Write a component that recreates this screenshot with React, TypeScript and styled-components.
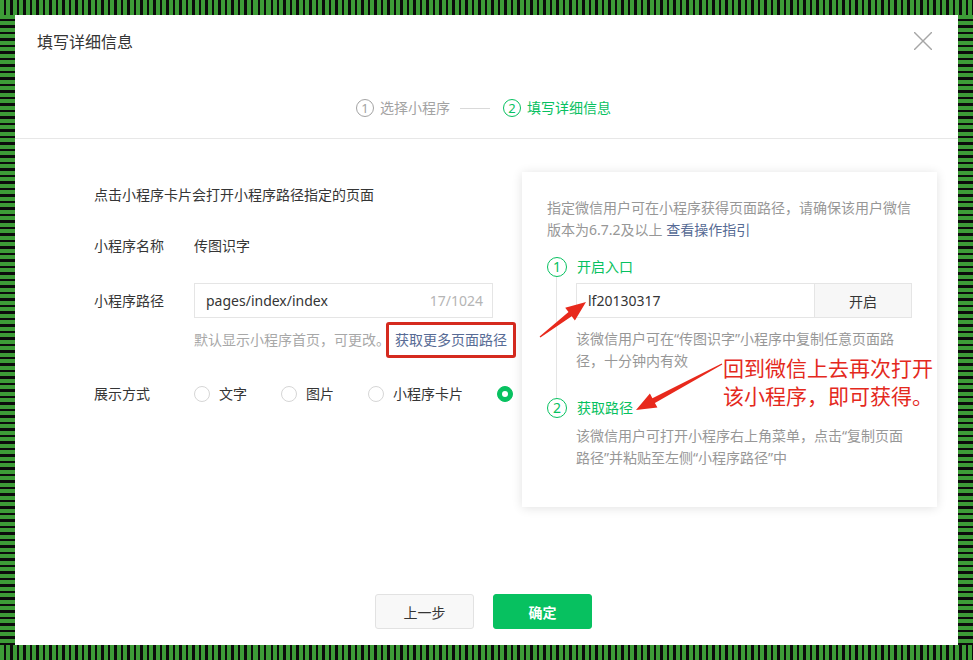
import styled, { createGlobalStyle } from "styled-components";

const GlobalStyle = createGlobalStyle`
  html, body {
    margin: 0;
    padding: 0;
    background: #fff;
  }
  body {
    font-family: "Noto Sans", "Noto Sans CJK SC", sans-serif;
    color: #353535;
  }
`;

const GREEN = "#07c160";
const RED = "#e4291d";

// striped frame round the dialog
const Frame = styled.div`
  position: relative;
  width: 973px;
  height: 660px;
  display: flex;
  flex-direction: column;
  overflow: hidden;
`;

const HBar = styled.div`
  height: 15px;
  flex-shrink: 0;
  background: repeating-linear-gradient(90deg, #3d9c37 0 4px, #0c0c0c 4px 6.5px);
`;

const Middle = styled.div`
  flex: 1;
  display: flex;
  padding: 0 15px;
  background: repeating-linear-gradient(180deg, #3d9c37 0 4px, #0c0c0c 4px 6.5px);
`;

const Dialog = styled.div`
  flex: 1;
  display: flex;
  flex-direction: column;
  background: #fff;
`;

const Header = styled.header`
  height: 52px;
  display: flex;
  align-items: center;
  justify-content: space-between;
  padding: 0 26px 0 22px;
`;

const Title = styled.h2`
  margin: 0;
  font-size: 16px;
  font-weight: normal;
  color: #353535;
`;

const Close = styled.svg`
  width: 18px;
  height: 18px;
  stroke: #a6a6a6;
  stroke-width: 1.4;
`;

const Steps = styled.div`
  box-sizing: border-box;
  height: 72px;
  padding: 31px 6px 0 0;
  display: flex;
  justify-content: center;
  align-items: flex-start;
  border-bottom: 1px solid #e7e7e7;
`;

const StepItem = styled.div<{ $active?: boolean }>`
  display: flex;
  align-items: center;
  gap: 6px;
  font-size: 14px;
  line-height: 20px;
  color: ${(p) => (p.$active ? GREEN : "#a3a3a3")};
`;

const StepCircle = styled.span`
  box-sizing: border-box;
  width: 18px;
  height: 18px;
  border: 1px solid currentColor;
  border-radius: 50%;
  display: flex;
  align-items: center;
  justify-content: center;
  font-size: 13px;
  line-height: 1;
`;

const StepLine = styled.span`
  width: 30px;
  height: 1px;
  margin: 10px 13px 0 10px;
  background: #d9d9d9;
`;

const Body = styled.div`
  flex: 1;
  position: relative;
  padding-left: 79px;
  font-size: 14px;
`;

const Intro = styled.p`
  margin: 46px 0 0;
  line-height: 20px;
`;

const Row = styled.div<{ $top: number }>`
  display: flex;
  align-items: center;
  margin-top: ${(p) => p.$top}px;
  line-height: 20px;
`;

const Label = styled.span`
  width: 100px;
  flex-shrink: 0;
`;

const PathInput = styled.div`
  box-sizing: border-box;
  width: 299px;
  height: 35px;
  display: flex;
  align-items: center;
  justify-content: space-between;
  padding: 0 9px 0 11px;
  border: 1px solid #e5e5e5;
`;

const Counter = styled.span`
  color: #b5b5b5;
`;

const Hint = styled.div`
  margin-top: 12px;
  padding-left: 100px;
  line-height: 20px;
  color: #a8a8a8;
  white-space: nowrap;
`;

const LinkBox = styled.span`
  display: inline-block;
  margin: -8px 0 -8px -4px;
  padding: 5px 6px;
  border: 3px solid #d52a1f;
  border-radius: 3px;
  color: #576b95;
`;

const Link = styled.span`
  color: #576b95;
`;

const Option = styled.label`
  display: flex;
  align-items: center;
  gap: 9px;
  margin-right: 34px;
`;

const Radio = styled.span<{ $checked?: boolean }>`
  box-sizing: border-box;
  width: 16px;
  height: 16px;
  border-radius: 50%;
  border: 1px solid ${(p) => (p.$checked ? GREEN : "#d6d6d6")};
  background: ${(p) => (p.$checked ? GREEN : "#fff")};
  display: flex;
  align-items: center;
  justify-content: center;

  &::after {
    content: "";
    display: ${(p) => (p.$checked ? "block" : "none")};
    width: 6px;
    height: 6px;
    border-radius: 50%;
    background: #fff;
  }
`;

const Footer = styled.footer`
  display: flex;
  justify-content: center;
  gap: 19px;
  padding: 0 6px 16px 0;
`;

const Button = styled.button<{ $primary?: boolean }>`
  box-sizing: border-box;
  width: 99px;
  height: 35px;
  border-radius: 3px;
  font-family: inherit;
  font-size: 14px;
  border: 1px solid ${(p) => (p.$primary ? GREEN : "#e2e2e2")};
  background: ${(p) => (p.$primary ? GREEN : "#f8f8f8")};
  color: ${(p) => (p.$primary ? "#fff" : "#353535")};
  font-weight: ${(p) => (p.$primary ? 600 : 400)};
`;

// popover with the path help, it sits over the form
const Panel = styled.div`
  position: absolute;
  left: 507px;
  top: 33px;
  z-index: 2;
  box-sizing: border-box;
  width: 415px;
  height: 335px;
  padding: 25px 25px 0;
  background: #fff;
  box-shadow: 0 1px 10px rgba(0, 0, 0, 0.12);
  color: #979797;
`;

const PanelText = styled.p`
  margin: 0;
  line-height: 22px;
  white-space: nowrap;
`;

const PanelStepHead = styled.div<{ $top: number }>`
  display: flex;
  align-items: center;
  gap: 10px;
  height: 20px;
  margin-top: ${(p) => p.$top}px;
`;

const PanelNum = styled.span`
  box-sizing: border-box;
  width: 20px;
  height: 20px;
  border: 1px solid ${GREEN};
  border-radius: 50%;
  color: ${GREEN};
  display: flex;
  align-items: center;
  justify-content: center;
  font-size: 14px;
  line-height: 1;
`;

const PanelStepTitle = styled.span`
  color: ${GREEN};
  line-height: 20px;
`;

const PanelStepBody = styled.div<{ $line?: boolean }>`
  margin-left: 9px;
  padding-left: 19px;
  padding-bottom: ${(p) => (p.$line ? 26 : 0)}px;
  border-left: 1px solid ${(p) => (p.$line ? "#e5e5e5" : "transparent")};
`;

const OpenRow = styled.div`
  display: flex;
  padding-top: 6px;
`;

const WxInput = styled.div`
  box-sizing: border-box;
  width: 238px;
  height: 35px;
  display: flex;
  align-items: center;
  padding-left: 11px;
  border: 1px solid #e5e5e5;
  border-right: none;
  color: #353535;
`;

const OpenButton = styled.div`
  box-sizing: border-box;
  width: 98px;
  height: 35px;
  display: flex;
  align-items: center;
  justify-content: center;
  background: #f7f7f7;
  border: 1px solid #e5e5e5;
  color: #353535;
`;

const StepHint = styled.p<{ $top: number }>`
  margin: ${(p) => p.$top}px 0 0;
  line-height: 22px;
  white-space: nowrap;
`;

const Note = styled.div`
  position: absolute;
  left: 201px;
  top: 182px;
  font-size: 21px;
  line-height: 28px;
  color: ${RED};
  white-space: nowrap;
`;

const Overlay = styled.svg`
  position: absolute;
  left: 0;
  top: 0;
  z-index: 5;
  pointer-events: none;
`;

function arrow(x1: number, y1: number, x2: number, y2: number) {
  const len = Math.hypot(x2 - x1, y2 - y1);
  const dx = (x2 - x1) / len;
  const dy = (y2 - y1) / len;
  const nx = -dy;
  const ny = dx;
  const head = 20;
  const bx = x2 - dx * head;
  const by = y2 - dy * head;
  const pts: [number, number][] = [
    [x1 + nx * 0.6, y1 + ny * 0.6],
    [bx + nx * 2.6, by + ny * 2.6],
    [bx + nx * 8, by + ny * 8],
    [x2, y2],
    [bx - nx * 8, by - ny * 8],
    [bx - nx * 2.6, by - ny * 2.6],
    [x1 - nx * 0.6, y1 - ny * 0.6],
  ];
  return pts.map((p) => p.map((v) => v.toFixed(1)).join(",")).join(" ");
}

const options = ["文字", "图片", "小程序卡片", "图文"];

export default function App() {
  return (
    <>
      <GlobalStyle />
      <Frame>
        <HBar />
        <Middle>
          <Dialog>
            <Header>
              <Title>填写详细信息</Title>
              <Close viewBox="0 0 18 18">
                <line x1="0" y1="0" x2="18" y2="18" />
                <line x1="18" y1="0" x2="0" y2="18" />
              </Close>
            </Header>

            <Steps>
              <StepItem>
                <StepCircle>1</StepCircle>
                选择小程序
              </StepItem>
              <StepLine />
              <StepItem $active>
                <StepCircle>2</StepCircle>
                填写详细信息
              </StepItem>
            </Steps>

            <Body>
              <Intro>点击小程序卡片会打开小程序路径指定的页面</Intro>
              <Row $top={31}>
                <Label>小程序名称</Label>
                <span>传图识字</span>
              </Row>
              <Row $top={27}>
                <Label>小程序路径</Label>
                <PathInput>
                  <span>pages/index/index</span>
                  <Counter>17/1024</Counter>
                </PathInput>
              </Row>
              <Hint>
                默认显示小程序首页，可更改。
                <LinkBox>获取更多页面路径</LinkBox>
              </Hint>
              <Row $top={34}>
                <Label>展示方式</Label>
                {options.map((o, i) => (
                  <Option key={o}>
                    <Radio $checked={i === 3} />
                    {o}
                  </Option>
                ))}
              </Row>

              <Panel>
                <PanelText>指定微信用户可在小程序获得页面路径，请确保该用户微信</PanelText>
                <PanelText>
                  版本为6.7.2及以上 <Link>查看操作指引</Link>
                </PanelText>

                <PanelStepHead $top={16}>
                  <PanelNum>1</PanelNum>
                  <PanelStepTitle>开启入口</PanelStepTitle>
                </PanelStepHead>
                <PanelStepBody $line>
                  <OpenRow>
                    <WxInput>lf20130317</WxInput>
                    <OpenButton>开启</OpenButton>
                  </OpenRow>
                  <StepHint $top={10}>
                    该微信用户可在“传图识字”小程序中复制任意页面路
                    <br />
                    径，十分钟内有效
                  </StepHint>
                </PanelStepBody>

                <PanelStepHead $top={0}>
                  <PanelNum>2</PanelNum>
                  <PanelStepTitle>获取路径</PanelStepTitle>
                </PanelStepHead>
                <PanelStepBody>
                  <StepHint $top={7}>
                    该微信用户可打开小程序右上角菜单，点击“复制页面
                    <br />
                    路径”并粘贴至左侧“小程序路径”中
                  </StepHint>
                </PanelStepBody>

                <Note>
                  回到微信上去再次打开
                  <br />
                  该小程序，即可获得。
                </Note>
              </Panel>
            </Body>

            <Footer>
              <Button>上一步</Button>
              <Button $primary>确定</Button>
            </Footer>
          </Dialog>
        </Middle>
        <HBar />

        <Overlay width="973" height="660" viewBox="0 0 973 660">
          <polygon points={arrow(540, 337, 586, 302)} fill="#e8291c" />
          <polygon points={arrow(722, 364, 636, 410)} fill="#e8291c" />
        </Overlay>
      </Frame>
    </>
  );
}
